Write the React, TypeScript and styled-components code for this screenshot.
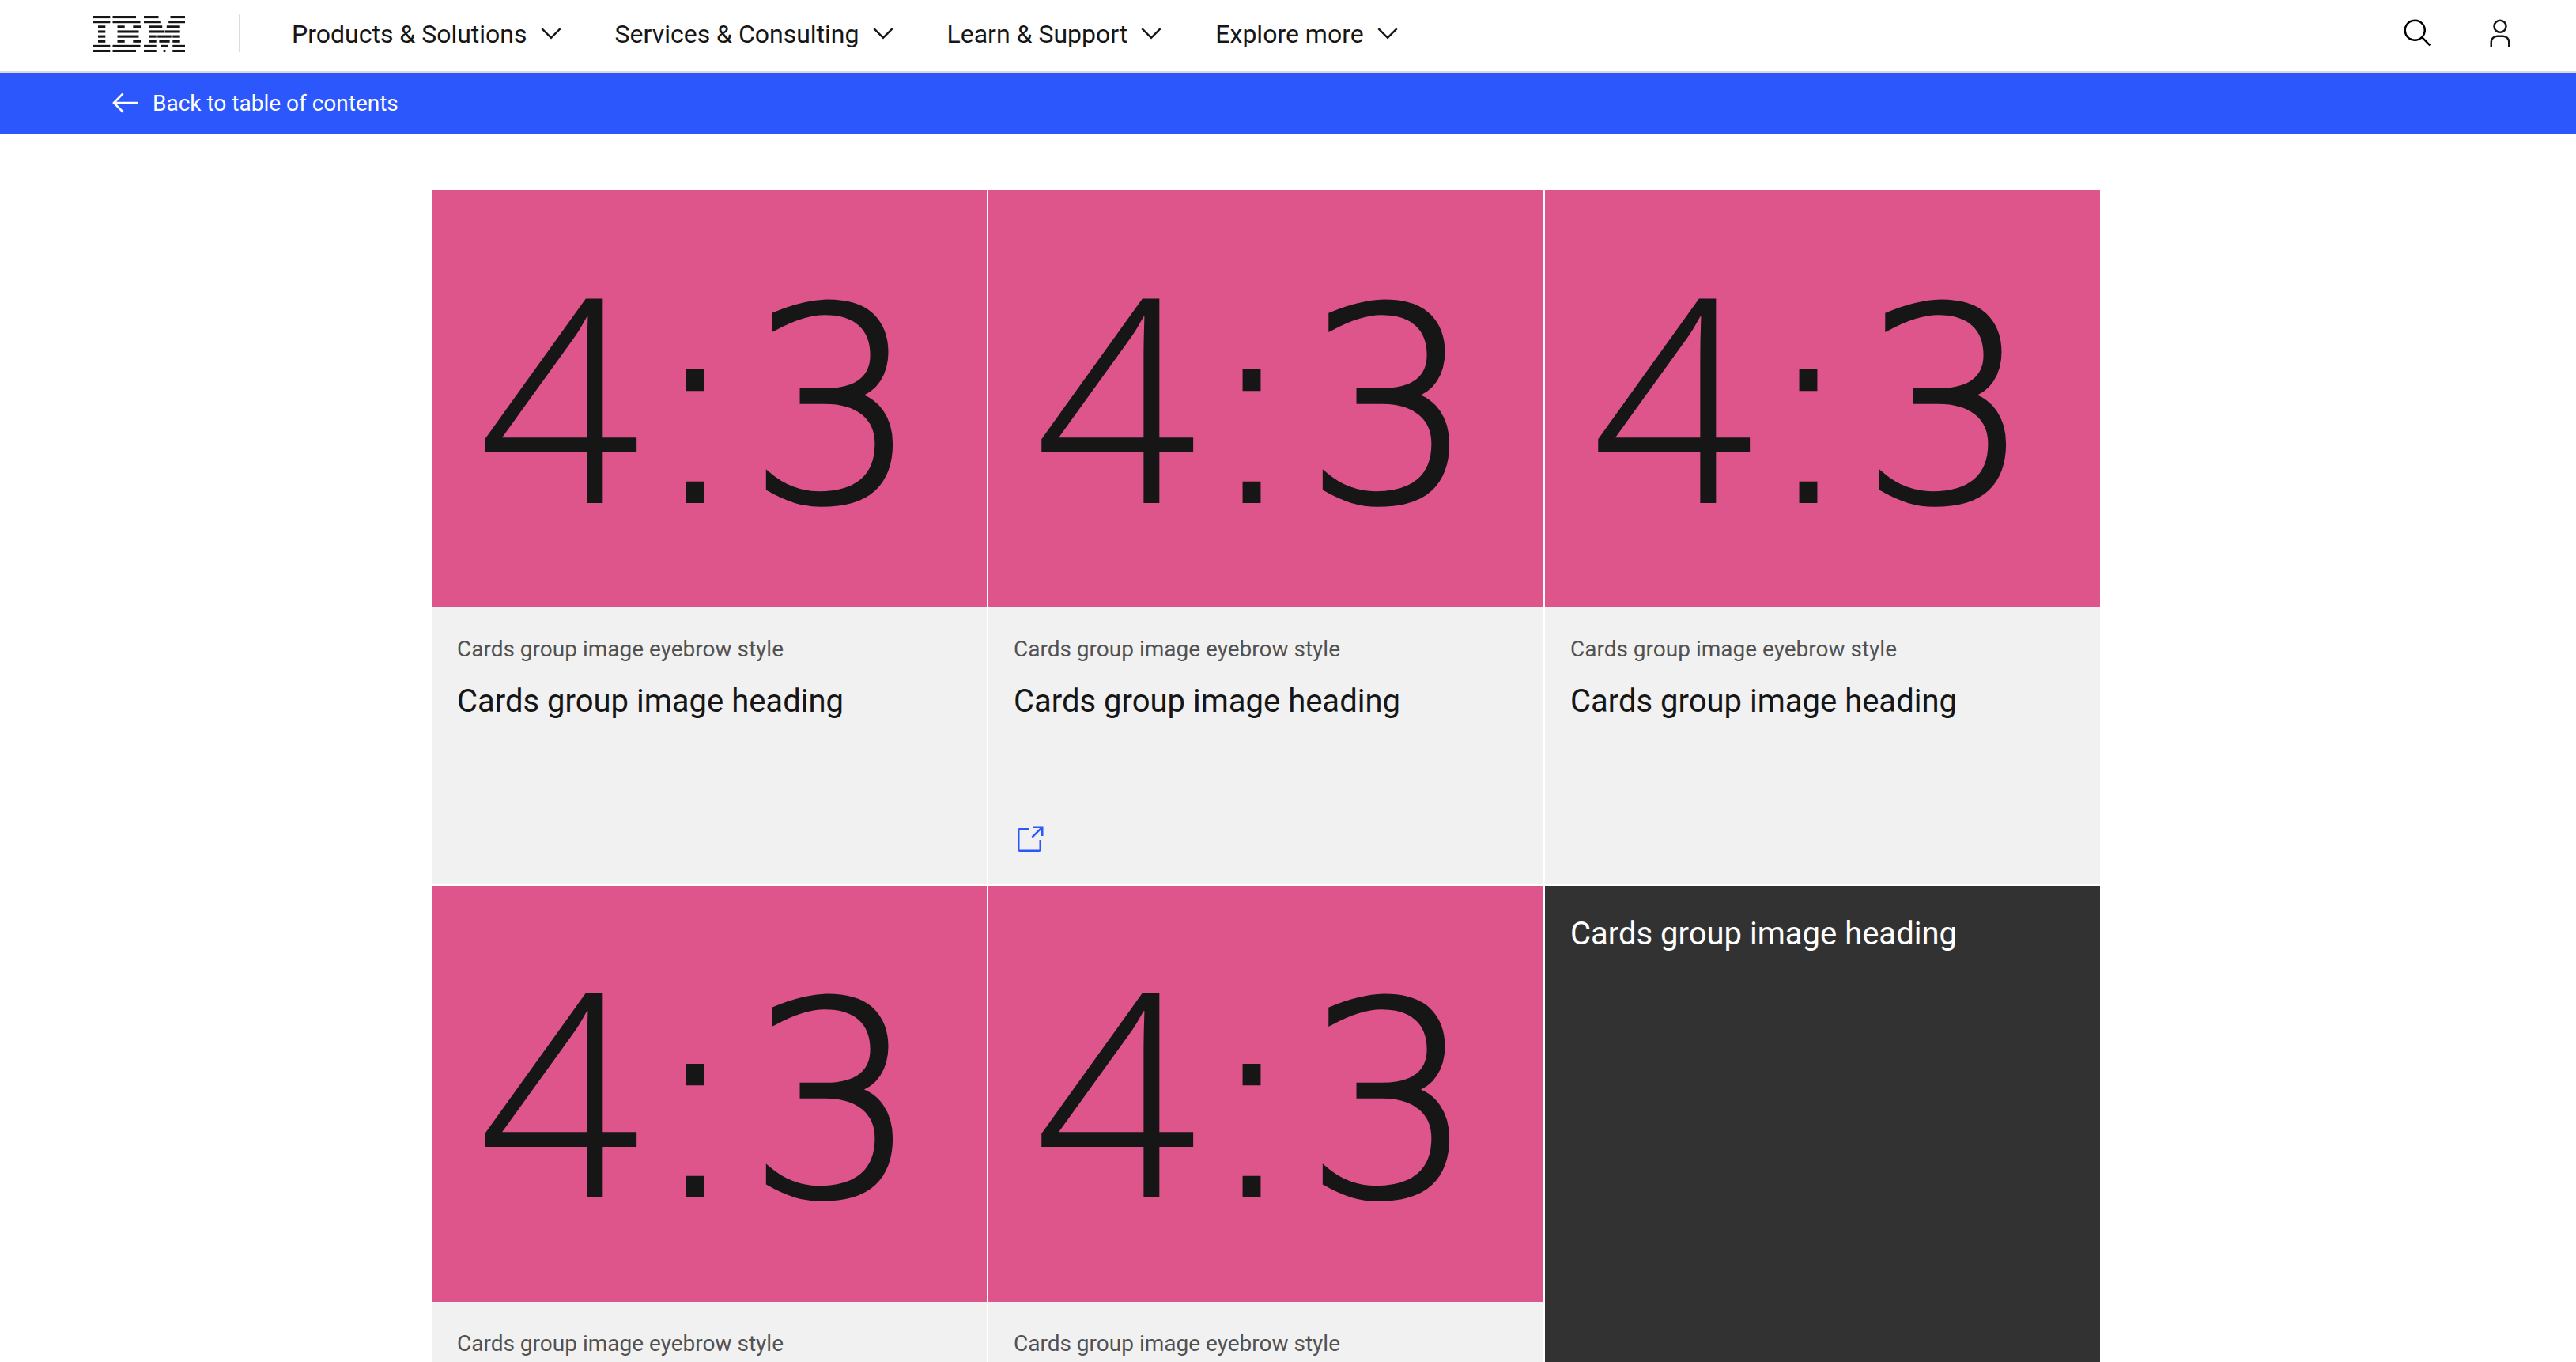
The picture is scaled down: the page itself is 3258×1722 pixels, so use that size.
import React from "react";
import styled, { createGlobalStyle } from "styled-components";

const color = {
  text: "#161616",
  subtle: "#525252",
  line: "#dcdcdc",
  blue: "#2c57fd",
  pink: "#dd558b",
  tile: "#f1f1f1",
  inverse: "#323232",
  white: "#ffffff",
};

const GlobalStyle = createGlobalStyle`
  *, *::before, *::after { box-sizing: border-box; }
  html, body { height: 100%; }
  body {
    margin: 0;
    overflow: hidden;
    background: ${color.white};
    color: ${color.text};
    font-family: Roboto, "Liberation Sans", sans-serif;
  }
`;

const Masthead = styled.header`
  display: flex;
  align-items: center;
  height: 92px;
  padding: 0 48px 6px 118px;
  border-bottom: 2px solid ${color.line};
`;

const LogoLink = styled.a`
  display: flex;
  padding-top: 2px;
`;

const Divider = styled.span`
  width: 2px;
  height: 48px;
  margin: 0 65px 0 68px;
  background: ${color.line};
`;

const Nav = styled.nav`
  display: flex;
  flex: 1;
  gap: 61px;
`;

const NavButton = styled.button`
  display: flex;
  align-items: center;
  gap: 10px;
  padding: 0;
  border: 0;
  background: none;
  color: inherit;
  font: inherit;
  font-size: 32px;
  line-height: 40px;
  white-space: nowrap;
`;

const Label = styled.span`
  padding-top: 2px;
`;

const Tools = styled.div`
  display: flex;
  gap: 8px;
`;

const ToolButton = styled.button<{ $tone: string }>`
  display: flex;
  align-items: center;
  justify-content: center;
  width: 96px;
  height: 84px;
  padding: 0;
  border: 0;
  background: none;
  color: ${(p) => p.$tone};
`;

const Icon = styled.svg`
  display: block;
  flex: none;
  width: 40px;
  height: 40px;
  fill: currentColor;
`;

const BackBar = styled.div`
  display: flex;
  align-items: center;
  height: 78px;
  padding: 0 138px 2px;
  background: ${color.blue};
`;

const BackLink = styled.a`
  display: flex;
  align-items: center;
  gap: 15px;
  color: ${color.white};
  font-size: 28px;
  line-height: 36px;
  text-decoration: none;
`;

const Main = styled.main`
  display: flex;
  justify-content: center;
  padding: 70px 58px 0 0;
`;

const CardGroup = styled.div`
  display: grid;
  grid-template-columns: repeat(3, 1fr);
  width: 66%;
  max-width: 2112px;
`;

const Card = styled.article<{ $dark?: boolean }>`
  display: flex;
  flex-direction: column;
  min-height: 878px;
  overflow: hidden;
  border-left: 2px solid ${color.white};
  background: ${(p) => (p.$dark ? color.inverse : color.tile)};
  color: ${(p) => (p.$dark ? color.white : color.text)};

  &:nth-child(n + 4) {
    border-top: 2px solid ${color.white};
  }

  &:nth-child(n + 4) > figure {
    margin-top: -2px;
  }
`;

const Figure = styled.figure`
  margin: 0 0 0 -2px;
  background: ${color.pink};
`;

const Ratio = styled.svg`
  display: block;
  width: 100%;
  fill: ${color.text};
`;

const RatioDigit = styled.text`
  font-family: "Noto Sans", sans-serif;
  font-size: 360px;
  font-weight: 300;
`;

const RatioThin = styled.text`
  font-family: "DejaVu Sans", sans-serif;
  font-size: 339px;
  font-weight: 200;
  stroke: ${color.text};
  stroke-width: 6px;
`;

const CardBody = styled.div`
  display: flex;
  flex: 1;
  flex-direction: column;
  align-items: flex-start;
  padding: 33px 32px 36px;
`;

const Eyebrow = styled.p`
  margin: 0 0 18px;
  color: ${color.subtle};
  font-size: 28px;
  line-height: 40px;
`;

const Heading = styled.h3`
  margin: 0;
  font-size: 40px;
  font-weight: 400;
  line-height: 56px;
`;

const CardLink = styled.a`
  margin-top: auto;
  color: ${color.blue};
`;

/* Horizontal bars of the logo, top to bottom, as [start, end] pairs. */
const logoBars: [number, number][][] = [
  [[0, 21.3], [24.5, 54], [64, 82.5], [97.5, 116]],
  [[0, 21.3], [24.5, 59.5], [64, 84.8], [95.2, 116]],
  [[6, 15.3], [30.5, 39.7], [50.3, 60], [70.3, 87.2], [92.8, 109.7]],
  [[6, 15.3], [30.5, 57.5], [70.3, 89.5], [90.5, 109.7]],
  [[6, 15.3], [30.5, 57.5], [70.3, 79.7], [81.2, 98.8], [100.3, 109.7]],
  [[6, 15.3], [30.5, 39.7], [50.3, 60], [70.3, 79.7], [83.4, 96.6], [100.3, 109.7]],
  [[0, 21.3], [24.5, 59.5], [64, 79.7], [85.8, 94.2], [100.3, 116]],
  [[0, 21.3], [24.5, 54], [64, 79.7], [88.6, 91.4], [100.3, 116]],
];

const Logo = () => (
  <svg width="116" height="46" viewBox="0 0 116 46" fill={color.text} aria-hidden="true">
    {logoBars.map((bars, row) =>
      bars.map(([start, end]) => (
        <rect key={`${row}-${start}`} x={start} y={row * 6.14} width={end - start} height="3.1" />
      ))
    )}
  </svg>
);

const ChevronDown = () => (
  <Icon viewBox="0 0 32 32" aria-hidden="true">
    <path d="M16 22 6 12l1.4-1.4 8.6 8.6 8.6-8.6L26 12z" />
  </Icon>
);

const SearchIcon = () => (
  <Icon viewBox="0 0 32 32" aria-hidden="true">
    <path d="M29,27.5859l-7.5521-7.5521a11.0177,11.0177,0,1,0-1.4141,1.4141L27.5859,29ZM4,13a9,9,0,1,1,9,9A9.01,9.01,0,0,1,4,13Z" />
  </Icon>
);

const UserIcon = () => (
  <Icon viewBox="0 0 32 32" aria-hidden="true">
    <path d="M16,4a5,5,0,1,1-5,5,5,5,0,0,1,5-5m0-2a7,7,0,1,0,7,7A7,7,0,0,0,16,2Z" />
    <path d="M26,30H24V25a5,5,0,0,0-5-5H13a5,5,0,0,0-5,5v5H6V25a7,7,0,0,1,7-7h6a7,7,0,0,1,7,7Z" />
  </Icon>
);

const ArrowLeft = () => (
  <Icon viewBox="0 0 40 40" aria-hidden="true">
    <path d="M17.5 8.5 6 20l11.5 11.5M6 20h30.3" fill="none" stroke="currentColor" strokeWidth="2.6" />
  </Icon>
);

const LaunchIcon = () => (
  <Icon viewBox="0 0 32 32" aria-hidden="true">
    <path d="M26,28H6a2.0027,2.0027,0,0,1-2-2V6A2.0027,2.0027,0,0,1,6,4H16V6H6V26H26V16h2V26A2.0027,2.0027,0,0,1,26,28Z" />
    <path d="M20 2V4h6.586L18 12.586 19.414 14 28 5.414V12h2V2z" />
  </Icon>
);

const RatioImage = () => (
  <Figure>
    <Ratio viewBox="0 0 704 528" role="img" aria-label="4:3">
      <RatioDigit x="61" y="396">4</RatioDigit>
      <RatioThin x="335" y="393" textAnchor="middle">:</RatioThin>
      <RatioThin x="402" y="393">3</RatioThin>
    </Ratio>
  </Figure>
);

const menus = ["Products & Solutions", "Services & Consulting", "Learn & Support", "Explore more"];

type CardData = { eyebrow?: string; image?: boolean; link?: boolean; dark?: boolean };

const eyebrow = "Cards group image eyebrow style";

const cards: CardData[] = [
  { eyebrow, image: true },
  { eyebrow, image: true, link: true },
  { eyebrow, image: true },
  { eyebrow, image: true },
  { eyebrow, image: true },
  { dark: true },
];

export default function App() {
  return (
    <>
      <GlobalStyle />
      <Masthead>
        <LogoLink href="#home" aria-label="IBM">
          <Logo />
        </LogoLink>
        <Divider />
        <Nav>
          {menus.map((menu) => (
            <NavButton key={menu} type="button">
              <Label>{menu}</Label>
              <ChevronDown />
            </NavButton>
          ))}
        </Nav>
        <Tools>
          <ToolButton type="button" $tone="#000000" aria-label="Search">
            <SearchIcon />
          </ToolButton>
          <ToolButton type="button" $tone={color.text} aria-label="User profile">
            <UserIcon />
          </ToolButton>
        </Tools>
      </Masthead>
      <BackBar>
        <BackLink href="#contents">
          <ArrowLeft />
          <Label>Back to table of contents</Label>
        </BackLink>
      </BackBar>
      <Main>
        <CardGroup>
          {cards.map((card, index) => (
            <Card key={index} $dark={card.dark}>
              {card.image && <RatioImage />}
              <CardBody>
                {card.eyebrow && <Eyebrow>{card.eyebrow}</Eyebrow>}
                <Heading>Cards group image heading</Heading>
                {card.link && (
                  <CardLink href="#card" aria-label="Open in a new tab">
                    <LaunchIcon />
                  </CardLink>
                )}
              </CardBody>
            </Card>
          ))}
        </CardGroup>
      </Main>
    </>
  );
}
